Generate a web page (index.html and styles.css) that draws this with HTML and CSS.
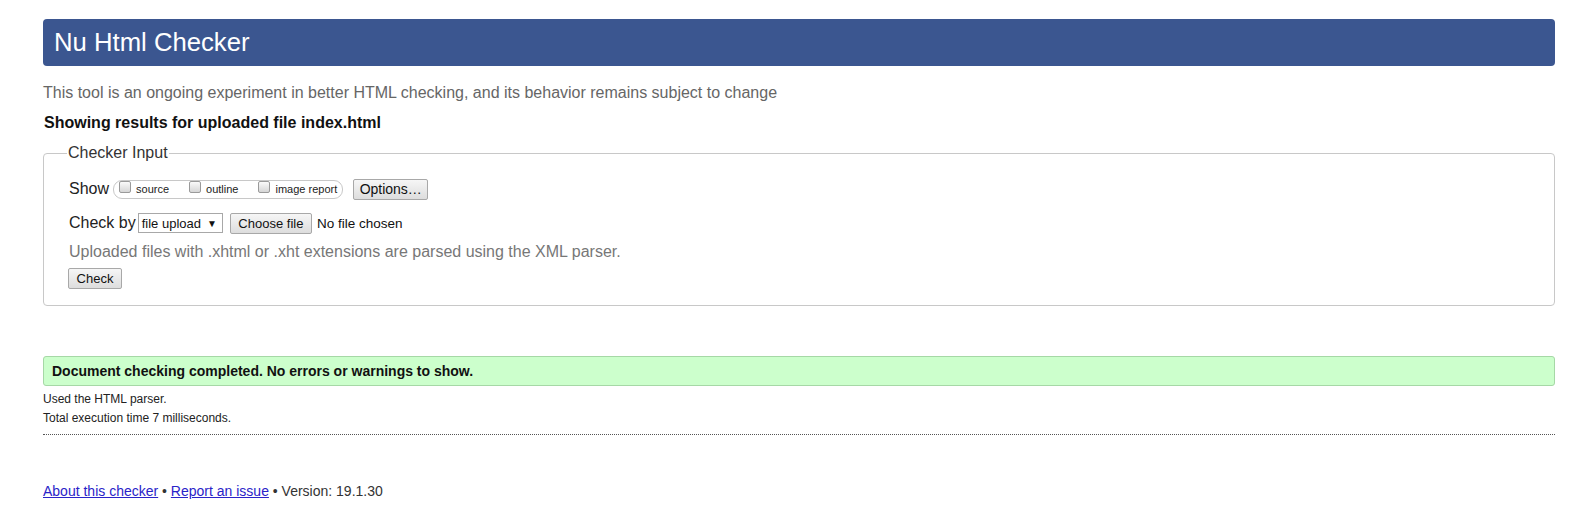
FILE: index.html
```html
<!DOCTYPE html>
<html lang="en">
<head>
<meta charset="utf-8">
<title>Showing results for uploaded file index.html - Nu Html Checker</title>
<link rel="stylesheet" href="styles.css">
</head>
<body>
<div class="page">
  <h1 class="title">Nu Html Checker</h1>
  <p class="intro">This tool is an ongoing experiment in better HTML checking, and its behavior remains subject to change</p>
  <p class="showing">Showing results for uploaded file index.html</p>
  <fieldset class="input">
    <legend>Checker Input</legend>
    <div class="row">
      <span class="lbl">Show</span>
      <span class="pill">
        <label class="opt"><span class="cb"></span>source</label>
        <label class="opt"><span class="cb"></span>outline</label>
        <label class="opt"><span class="cb"></span>image report</label>
      </span>
      <button class="btn btn-options" type="button">Options…</button>
    </div>
    <div class="row">
      <span class="lbl">Check by</span>
      <span class="select">file upload <span class="caret">▼</span></span>
      <button class="btn btn-file" type="button">Choose file</button>
      <span class="nofile">No file chosen</span>
    </div>
    <p class="note">Uploaded files with .xhtml or .xht extensions are parsed using the XML parser.</p>
    <div class="row">
      <button class="btn btn-check" type="button">Check</button>
    </div>
  </fieldset>
  <p class="success">Document checking completed. No errors or warnings to show.</p>
  <div class="details">
    <p>Used the HTML parser.</p>
    <p>Total execution time 7 milliseconds.</p>
  </div>
  <p class="footer"><a href="#">About this checker</a> • <a href="#">Report an issue</a> • Version: 19.1.30</p>
</div>
</body>
</html>
```

FILE: styles.css
```css
html, body {
  margin: 0;
  padding: 0;
  background: #fff;
}
body {
  font-family: "Liberation Sans", Arial, sans-serif;
  color: #333;
}
.page {
  padding: 19px 22px 0 43px;
}
.title {
  margin: 0;
  height: 47px;
  box-sizing: border-box;
  background: #3b5690;
  color: #fff;
  font-size: 25.7px;
  font-weight: normal;
  line-height: 47px;
  padding: 0 11px;
  border-radius: 4px;
}
.intro {
  margin: 18px 0 0;
  font-size: 16px;
  line-height: 18px;
  color: #666;
}
.showing {
  margin: 12px 0 0 1px;
  font-size: 16px;
  line-height: 18px;
  font-weight: bold;
  color: #111;
}
.input {
  margin: 12px 0 0;
  padding: 16px 25px 16px 25px;
  border: 1px solid #c8c8c8;
  border-radius: 4px;
  min-width: 0;
}
.input legend {
  padding: 0 1px;
  margin-left: -2px;
  font-size: 16px;
  color: #333;
}
.row {
  display: flex;
  align-items: center;
  height: 22px;
  margin-bottom: 12px;
}
.row:last-child {
  margin-bottom: 0;
}
.lbl {
  font-size: 16px;
  color: #222;
  margin-right: 4px;
}
.pill {
  display: inline-flex;
  align-items: center;
  height: 19px;
  box-sizing: border-box;
  border: 1px solid #c8c8c8;
  border-radius: 9px;
  padding: 0 5px 0 5px;
  gap: 20px;
}
.opt {
  display: inline-flex;
  align-items: center;
  font-size: 11px;
  color: #222;
}
.cb {
  width: 12px;
  height: 12px;
  box-sizing: border-box;
  border: 1px solid #9a9a9a;
  border-radius: 2px;
  background: linear-gradient(#fafafa, #d6d6d6);
  margin: -4px 5px 0 0;
}
.btn {
  font-family: "Liberation Sans", Arial, sans-serif;
  font-size: 13px;
  color: #111;
  height: 21px;
  box-sizing: border-box;
  border: 1px solid #a8a8a8;
  border-radius: 2px;
  background: linear-gradient(#f6f6f6, #dddddd);
  padding: 0 4px;
  line-height: 19px;
}
.btn-options {
  margin-left: 10px;
  width: 75px;
  font-size: 14px;
}
.select {
  display: inline-flex;
  align-items: center;
  height: 20px;
  box-sizing: border-box;
  border: 1px solid #a8a8a8;
  background: #fff;
  font-size: 13px;
  color: #111;
  padding: 0 5px 0 3px;
  margin-left: -2px;
}
.caret {
  font-size: 10px;
  margin-left: 6px;
}
.btn-file {
  margin-left: 7px;
  width: 82px;
}
.nofile {
  font-size: 13.5px;
  color: #111;
  margin-left: 5px;
}
.note {
  margin: -3px 0 6px;
  font-size: 16px;
  line-height: 18px;
  color: #777;
}
.btn-check {
  margin-left: -1px;
  width: 54px;
}
.success {
  margin: 50px 0 0;
  height: 30px;
  box-sizing: border-box;
  background: #ccffcc;
  border: 1px solid #a6d8a6;
  border-radius: 3px;
  font-size: 14px;
  font-weight: bold;
  color: #111;
  line-height: 28px;
  padding: 0 8px;
}
.details {
  margin-top: 4px;
  padding-bottom: 6px;
  border-bottom: 1px dotted #555;
}
.details p {
  margin: 0;
  font-size: 12px;
  line-height: 19px;
  color: #222;
}
.footer {
  margin: 48px 0 0;
  font-size: 14px;
  color: #333;
}
.footer a {
  color: #2a23c8;
}
```
